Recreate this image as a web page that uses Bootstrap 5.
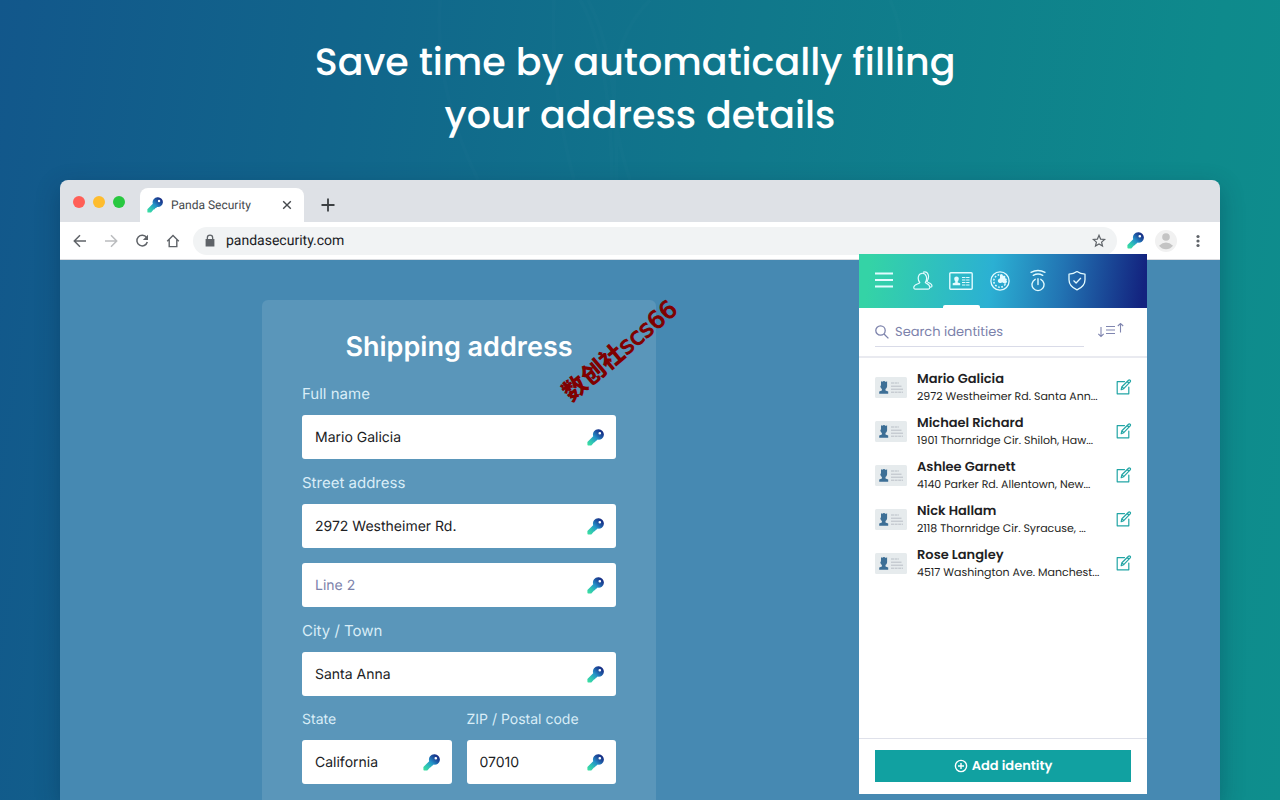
<!DOCTYPE html>
<html lang="en">
<head>
<meta charset="utf-8">
<meta name="viewport" content="width=device-width, initial-scale=1">
<title>Panda Security</title>
<link href="https://cdn.jsdelivr.net/npm/bootstrap@5.3.0/dist/css/bootstrap.min.css" rel="stylesheet">
<style>
  :root { --geo: Poppins, Inter, sans-serif; --ui: Inter, sans-serif; --chrome: Roboto, sans-serif; }
  body {
    font-family: var(--ui);
    text-rendering: geometricPrecision;
    background: linear-gradient(98deg, #12578b 0%, #11658b 25%, #10788b 55%, #0e8a8c 88%, #0e8e8d 100%);
  }
  input, button { text-rendering: inherit; }
  svg { display: block; flex: none; }
  .stroked { fill: none; }
  .geo { font-family: var(--geo); font-feature-settings: "cv11"; }
  .swirl { position: absolute; inset: 0; width: 100%; height: 180px; }
  .hero { height: 180px; padding-top: 36px; }
  .hero h1 { font-size: 38px; line-height: 53px; font-weight: 500; }
  .window { margin: 0 60px; border-radius: 8px 8px 0 0; box-shadow: 0 8px 24px rgba(0, 30, 60, .3); }
  .tabstrip { height: 42px; background: #dee1e6; border-radius: 8px 8px 0 0; padding: 8px 13px 0; }
  .light { width: 12px; height: 12px; border-radius: 50%; }
  .tab { width: 164px; height: 34px; margin-left: 15px; padding: 0 10px 0 7px; border-radius: 8px 8px 0 0;
         font: 12px/20px var(--chrome); color: #45494d; }
  .plain { padding: 0; border: 0; background: none; color: #5f6368; }
  .toolbar { height: 38px; border-bottom: 1px solid #dadce0; padding: 0 14px 0 12px; }
  .tool { width: 16px; height: 16px; }
  .omni { height: 28px; border-radius: 14px; background: #f1f3f4; padding: 0 10px 0 9px; }
  .omni input { font: 14px/20px var(--chrome); color: #202124; outline: 0; }
  .page { background: #4689b2; }
  .ship { width: 394px; padding: 31px 40px 16px; background: #5a96ba; border-radius: 6px 6px 0 0; color: #fff; }
  .ship h2 { font-size: 27px; line-height: 32px; font-weight: 600; margin-bottom: 19px; }
  .ship label { font-size: 15px; line-height: 24px; margin-bottom: 9px; color: #d9edf7; }
  .ship .pair label { font-size: 14px; margin-bottom: 8px; }
  .pair { display: grid; grid-template-columns: minmax(0, 1fr) minmax(0, 1fr); gap: 15px; }
  .box { height: 44px; border-radius: 3px; background: #fff; padding: 1px 12px 0 13px; }
  .box input { width: 0; font-size: 14px; color: #202124; border: 0; outline: 0; padding: 0; background: none; }
  .box input::placeholder, .search input::placeholder { color: #7c82ab; opacity: 1; }
  .line + .line { margin-top: 12px; }
  .line .box + .box { margin-top: 15px; }
  .stamp { position: absolute; left: 287px; top: 33px; color: #800000; white-space: nowrap; transform: rotate(-40deg);
           font: 900 24px/32px "Noto Sans CJK SC", sans-serif; }
  .stamp span { font-family: "DejaVu Sans", sans-serif; font-weight: 400; -webkit-text-stroke: 1px #800000; }
  .popup { width: 288px; min-height: 540px; margin: -6px 73px 6px 0; z-index: 2; }
  .popnav { height: 54px; padding: 0 51px 0 6px; background: linear-gradient(97deg, #34d3a6 4%, #2bb0d3 46%, #2274b3 70%, #13237f 98%); }
  .popnav button { flex: 1 1 0; height: 54px; color: #e2fbff; }
  .popnav .on::after { content: ""; position: absolute; left: 1px; right: 1px; bottom: 0; height: 3px; border-radius: 2px 2px 0 0; background: #fff; }
  .searchrow { height: 50px; border-bottom: 2px solid #e9eaf0; padding: 0 22px 0 16px; }
  .search { width: 209px; height: 32px; border-bottom: 1px solid #d9dbe8; margin-top: 7px; padding-top: 2px; }
  .search input { font-size: 13px; border: 0; outline: 0; padding: 0; min-width: 0; }
  .idents { padding-top: 7px; }
  .ident { height: 44px; padding: 0 15px 0 16px; color: #1f1f24; gap: 10px; }
  .ident strong { font-size: 13px; line-height: 19px; font-weight: 600; }
  .ident span { font-size: 11px; line-height: 17px; white-space: nowrap; }
  .popfoot { border-top: 1px solid #dfe1ea; padding: 11px 16px 12px; }
  .add, .add:hover { height: 32px; background: #11a1a1; color: #fff; font-size: 13px; font-weight: 600; border: 0; border-radius: 0; padding: 0; }
</style>
</head>
<body class="min-vh-100 d-flex flex-column position-relative">

<svg width="0" height="0" class="position-absolute" aria-hidden="true">
  <defs>
    <linearGradient id="kg" x1="1" y1="16" x2="15" y2="1" gradientUnits="userSpaceOnUse">
      <stop offset="0" stop-color="#3be0a0"/><stop offset=".25" stop-color="#2fc4b4"/><stop offset=".52" stop-color="#2390c8"/><stop offset=".72" stop-color="#1f5aa5"/><stop offset="1" stop-color="#14247e"/>
    </linearGradient>
    <symbol id="key" viewBox="0 0 17 17">
      <path fill="url(#kg)" fill-rule="evenodd" d="M11.500.3a5.200 5.200 0 1 1-.8 10.300L9.700 11.600l-1.100.3-.4 1.200-1.200.3L4.300 16.500H1.200Q.4 16.500.4 15.600V13L6.200 7.200A5.300 5.300 0 0 1 11.500.3zM12.800 2.900a1.300 1.300 0 1 0 0 2.600 1.300 1.300 0 0 0 0-2.600z"/>
    </symbol>
    <symbol id="idcard" viewBox="0 0 32 21">
      <rect width="32" height="21" rx="1.500" fill="#e6ebed"/>
      <path fill="#3d6f96" d="M6 4.200l1.200.6Q9 3.300 10.800 4.900l1.300-.7V9.200q-.2 2-1.600 2.800v1.600l2.700 1v2.100H4.200v-2.100l2.700-1v-1.600Q5.600 11.300 5.300 9.200l.7-1z"/>
      <path stroke="#b3bac2" stroke-width=".9" stroke-dasharray="3 .6" d="M16 6h8M16 15.200h12"/>
      <path stroke="#b3bac2" stroke-width=".9" d="M16 9.200h10.500M16 12.200h12"/>
    </symbol>
    <symbol id="edit" viewBox="0 0 16 16">
      <g fill="none" stroke="#22a5a5" stroke-width="1.200" stroke-linejoin="round" stroke-linecap="round"><path d="M8.500 2.600H1.200v12.200h11.600V8"/><path d="M5.200 10.700l.7-3L12.500 1.200q.8-.7 1.600 0t.1 1.700L7.700 9.700zM11.300 2.500l1.700 1.700M5.900 7.700l1.800 2"/></g>
    </symbol>
  </defs>
</svg>
<svg class="swirl stroked" viewBox="0 0 1280 180" preserveAspectRatio="none" stroke="#fff" stroke-opacity=".012" stroke-width="4" aria-hidden="true">
  <path d="M440 0q-6 90 38 180M554 0q-4 90 20 180M580 0q30 50 32 180M588 0q32 60 28 180M650 0q-60 60-20 180M890 0q14 30 10 60"/>
</svg>

<header class="hero text-center text-white position-relative geo">
  <h1 class="m-0">Save time by automatically filling&nbsp;<br>your address details</h1>
</header>

<main class="window d-flex flex-column flex-grow-1 position-relative">
  <div class="tabstrip d-flex align-items-center">
    <div class="d-flex gap-2 align-self-start mt-2">
      <span class="light" style="background:#ff5f57"></span><span class="light" style="background:#febc2e"></span><span class="light" style="background:#28c840"></span>
    </div>
    <div class="tab bg-white d-flex align-items-center">
      <svg width="16" height="16"><use href="#key" width="16" height="16"/></svg>
      <span class="ms-2">Panda Security</span>
      <button class="plain ms-auto" aria-label="Close tab"><svg class="stroked" width="14" height="14" stroke="#45494d" stroke-width="1.400"><path d="M3.200 3.200l7.600 7.600M10.800 3.200l-7.600 7.600"/></svg></button>
    </div>
    <button class="plain ms-3" aria-label="New tab"><svg class="stroked" width="16" height="16" stroke="#3c4043" stroke-width="1.800"><path d="M8 1.500v13M1.500 8h13"/></svg></button>
  </div>

  <div class="toolbar bg-white d-flex align-items-center">
    <div class="d-flex me-2" style="gap:15px">
      <button class="plain" aria-label="Back"><svg class="tool stroked" stroke="#5f6368" stroke-width="1.500"><path d="M14 8H2.500M8 2.300L2.300 8 8 13.700"/></svg></button>
      <button class="plain" aria-label="Forward"><svg class="tool stroked" stroke="#babcbe" stroke-width="1.500"><path d="M2 8h11.500M8 2.300L13.700 8 8 13.700"/></svg></button>
      <button class="plain" aria-label="Reload"><svg class="tool stroked" stroke="#5f6368" stroke-width="1.500"><path d="M12.600 4.600A5.300 5.300 0 1 0 13.300 9"/><path fill="#5f6368" stroke="none" d="M14 1.800V7H8.800z"/></svg></button>
      <button class="plain" aria-label="Home"><svg class="tool stroked" stroke="#5f6368" stroke-width="1.400"><path d="M2.200 8.300L8 2.600l5.800 5.700M4.200 6.700v6.900h7.600V6.700"/></svg></button>
    </div>
    <div class="omni d-flex align-items-center flex-grow-1 ms-1">
      <svg width="16" height="16" fill="#5f6368"><path fill-rule="evenodd" d="M4.700 6V4.800a3.300 3.300 0 0 1 6.600 0V6h1.100v7.500H3.600V6zm1.300 0h4V4.800a2 2 0 0 0-4 0z"/></svg>
      <input class="border-0 bg-transparent p-0 ms-2 flex-grow-1" type="text" value="pandasecurity.com" aria-label="Address">
      <svg class="stroked" width="16" height="16" stroke="#5f6368" stroke-width="1.200"><path d="M8 2.300l1.600 3.800 4 .3-3 2.700.9 4L8 11l-3.500 2.100.9-4-3-2.700 4-.3z"/></svg>
    </div>
    <svg class="ms-2" width="22" height="17" viewBox="-2 0 22 17"><use href="#key" width="17" height="17"/></svg>
    <svg class="ms-2" width="22" height="22"><circle cx="11" cy="11" r="11" fill="#f1f1f1"/><circle cx="11" cy="7" r="3.800" fill="#c4c4c4"/><path fill="#c4c4c4" d="M4 15.700Q7.500 12.500 11 12.500t7 3.200Q15 19.300 11 19.300T4 15.700z"/></svg>
    <button class="plain" style="margin-left:13px" aria-label="Menu"><svg width="16" height="16" fill="#5f6368"><circle cx="8" cy="3.500" r="1.600"/><circle cx="8" cy="8" r="1.600"/><circle cx="8" cy="12.500" r="1.600"/></svg></button>
  </div>

  <div class="page d-flex flex-grow-1">
    <div class="flex-grow-1 d-flex justify-content-center" style="padding:40px 1px 0 0">
      <form class="ship position-relative">
        <h2 class="text-center">Shipping address</h2>
        <div class="line"><label class="d-block" for="fn">Full name</label>
          <div class="box d-flex align-items-center"><input class="flex-grow-1" id="fn" value="Mario Galicia"><svg width="17" height="17"><use href="#key"/></svg></div></div>
        <div class="line"><label class="d-block" for="st">Street address</label>
          <div class="box d-flex align-items-center"><input class="flex-grow-1" id="st" value="2972 Westheimer Rd."><svg width="17" height="17"><use href="#key"/></svg></div>
          <div class="box d-flex align-items-center"><input class="flex-grow-1" placeholder="Line 2" aria-label="Line 2"><svg width="17" height="17"><use href="#key"/></svg></div></div>
        <div class="line"><label class="d-block" for="ct">City / Town</label>
          <div class="box d-flex align-items-center"><input class="flex-grow-1" id="ct" value="Santa Anna"><svg width="17" height="17"><use href="#key"/></svg></div></div>
        <div class="line pair">
          <div><label class="d-block" for="sa">State</label>
            <div class="box d-flex align-items-center"><input class="flex-grow-1" id="sa" value="California"><svg width="17" height="17"><use href="#key"/></svg></div></div>
          <div><label class="d-block" for="zp">ZIP / Postal code</label>
            <div class="box d-flex align-items-center"><input class="flex-grow-1" id="zp" value="07010"><svg width="17" height="17"><use href="#key"/></svg></div></div>
        </div>
        <div class="stamp">数创社<span>scs66</span></div>
      </form>
    </div>

    <aside class="popup geo bg-white d-flex flex-column flex-shrink-0">
      <nav class="popnav d-flex">
        <button class="plain d-flex align-items-center justify-content-center" aria-label="Menu"><svg class="stroked" width="20" height="20" stroke="currentColor" stroke-width="1.800"><path d="M1 2.500h18M1 9h18M1 15.500h18"/></svg></button>
        <button class="plain d-flex align-items-center justify-content-center" aria-label="Accounts"><svg class="stroked" width="20" height="20" stroke="currentColor" stroke-width="1.200" stroke-linecap="round" stroke-linejoin="round"><path d="M6.800 11.500C4.500 9.100 4.400 2.800 9 2.300s5.800 5.800 3.300 9.200c.3 1 4.500 1.300 4.500 4.800 0 1.400-.5 1.800-1.500 1.800H2.300C1.200 18.100.8 17.600.8 16.300c0-3.500 5.500-3 6-4.800zM10.500 1.100c4.600-1.200 6.600 4.700 3.500 9.300.6 1.500 5 1.500 5 4.500 0 .8-.6 1.200-1.500 1.200"/></svg></button>
        <button class="plain on position-relative d-flex align-items-center justify-content-center" aria-label="Identities"><svg class="stroked" width="24" height="18" stroke="currentColor" stroke-width="1.400"><rect x=".8" y=".8" width="22.400" height="16.400" rx="1"/><path fill="currentColor" stroke="none" d="M5.200 6.500Q5.200 4.600 7.500 4.600t2.300 1.900q0 2-1.100 2.900v1l2.500.8v2H3.700v-2l2.600-.8v-1Q5.200 8.500 5.200 6.500z"/><path stroke-width="1.200" stroke-dasharray="3.400 .7" d="M13 5.500h7.500M13 8h7.500M13 10.500h7.500M13 13h7.500"/></svg></button>
        <button class="plain d-flex align-items-center justify-content-center" aria-label="Activity"><svg class="stroked" width="20" height="20" stroke="currentColor" stroke-width="1.300"><circle cx="10" cy="10" r="9.100"/><circle cx="10" cy="10" r="6.200" stroke-width="1.500" stroke-dasharray="1.700 1.550"/><path fill="currentColor" stroke="none" d="M10 3.500A6.500 6.500 0 0 1 15.500 13L12 11.200a2.300 2.300 0 1 1-2-3.700z"/></svg></button>
        <button class="plain d-flex align-items-center justify-content-center" aria-label="Generator"><svg class="stroked" width="20" height="24" stroke="currentColor" stroke-width="1.400" stroke-linecap="round"><path d="M3 3.300q7-3.600 14 0M5.300 6.300q4.700-2.500 9.400 0M10 9.800V15.500M7.200 10.300a6 6 0 1 0 5.600 0"/></svg></button>
        <button class="plain d-flex align-items-center justify-content-center" aria-label="Security"><svg class="stroked" width="20" height="20" stroke="currentColor" stroke-width="1.300" stroke-linejoin="round"><path d="M10 .6Q13.500 3.200 18 3.200V8.700q0 6.500-8 10.200Q2 15.200 2 8.700V3.200Q6.500 3.200 10 .6z"/><path d="M6.500 9.500l2.600 2.500 4.800-5"/></svg></button>
      </nav>
      <div class="searchrow d-flex justify-content-between">
        <div class="search d-flex align-items-center">
          <svg class="stroked" width="14" height="14" stroke="#7c82ab" stroke-width="1.300"><circle cx="5.500" cy="5.500" r="4.700"/><path d="M9 9l4.400 4.400"/></svg>
          <input class="flex-grow-1" style="margin-left:6px" type="search" placeholder="Search identities" aria-label="Search identities">
        </div>
        <button class="plain" aria-label="Sort"><svg width="28" height="18" class="stroked" stroke="#8086b0" stroke-width="1.100"><path d="M4 4v9.500M1.300 10.800L4 13.500l2.700-2.700M9 3.500h9M9 7h9M9 10.500h9M23.500 9.500V0.500M20.800 3L23.500.5l2.700 2.500"/></svg></button>
      </div>
      <ul class="idents list-unstyled m-0 flex-grow-1">
        <li class="ident d-flex align-items-center"><svg width="32" height="21"><use href="#idcard"/></svg><div class="d-flex flex-column"><strong>Mario Galicia</strong><span>2972 Westheimer Rd. Santa Ann...</span></div><button class="plain ms-auto" aria-label="Edit"><svg width="16" height="16"><use href="#edit"/></svg></button></li>
        <li class="ident d-flex align-items-center"><svg width="32" height="21"><use href="#idcard"/></svg><div class="d-flex flex-column"><strong>Michael Richard</strong><span>1901 Thornridge Cir. Shiloh, Haw...</span></div><button class="plain ms-auto" aria-label="Edit"><svg width="16" height="16"><use href="#edit"/></svg></button></li>
        <li class="ident d-flex align-items-center"><svg width="32" height="21"><use href="#idcard"/></svg><div class="d-flex flex-column"><strong>Ashlee Garnett</strong><span>4140 Parker Rd. Allentown, New...</span></div><button class="plain ms-auto" aria-label="Edit"><svg width="16" height="16"><use href="#edit"/></svg></button></li>
        <li class="ident d-flex align-items-center"><svg width="32" height="21"><use href="#idcard"/></svg><div class="d-flex flex-column"><strong>Nick Hallam</strong><span>2118 Thornridge Cir. Syracuse, ...</span></div><button class="plain ms-auto" aria-label="Edit"><svg width="16" height="16"><use href="#edit"/></svg></button></li>
        <li class="ident d-flex align-items-center"><svg width="32" height="21"><use href="#idcard"/></svg><div class="d-flex flex-column"><strong>Rose Langley</strong><span>4517 Washington Ave. Manchest...</span></div><button class="plain ms-auto" aria-label="Edit"><svg width="16" height="16"><use href="#edit"/></svg></button></li>
      </ul>
      <div class="popfoot">
        <button class="add btn w-100 d-flex align-items-center justify-content-center gap-1"><svg class="stroked" width="14" height="14" stroke="#fff" stroke-width="1.400"><circle cx="7" cy="7" r="5.600"/><path d="M7 4v6M4 7h6"/></svg>Add identity</button>
      </div>
    </aside>
  </div>
</main>
<script src="https://cdn.jsdelivr.net/npm/bootstrap@5.3.0/dist/js/bootstrap.bundle.min.js"></script>
</body>
</html>
